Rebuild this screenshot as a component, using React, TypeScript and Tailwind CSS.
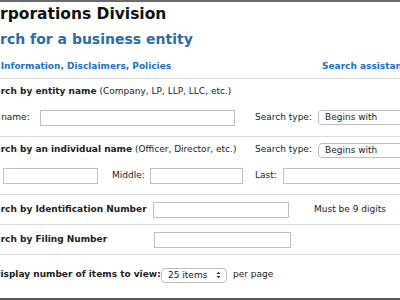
import React from "react";

const inputCls = "shrink-0 h-[16px] border border-[#b7c0ca] bg-white";

function FakeSelect({ w, text, arrows }: { w: string; text: string; arrows?: boolean }) {
  return (
    <div className={`shrink-0 ${w} h-[15px] border border-[#bdbdbd] rounded-[4px] bg-white flex items-center pl-[6px] pr-[5px] justify-between`}>
      <span className="text-[9px] text-[#222] leading-none">{text}</span>
      {arrows && (
        <svg width="5" height="8" viewBox="0 0 5 8" className="shrink-0">
          <path d="M0.5 3 L2.5 0.8 L4.5 3 Z" fill="#333" />
          <path d="M0.5 5 L2.5 7.2 L4.5 5 Z" fill="#333" />
        </svg>
      )}
    </div>
  );
}

export default function App() {
  return (
    <div
      className="w-[400px] h-[300px] overflow-hidden bg-white flex flex-col border-t-2 border-b-2 border-t-[#6a6a6a] border-b-[#5a5a5a] text-[9px] text-[#222] whitespace-nowrap"
      style={{ fontFamily: '"DejaVu Sans", Verdana, sans-serif' }}
    >
      {/* header */}
      <div className="h-[25px] shrink-0 flex items-center pt-[1px]">
        <h1 className="ml-[-22px] text-[15.5px] font-bold text-[#111] leading-none">Corporations Division</h1>
      </div>
      <div className="h-[24px] shrink-0 flex items-center">
        <h2 className="ml-[-29px] text-[14px] font-bold text-[#2d6ca2] leading-none">Search for a business entity</h2>
      </div>
      <div className="h-[28px] shrink-0 flex items-center pt-[4px] border-b border-[#dcdcdc]">
        <span className="ml-[-42px] w-[364px] shrink-0 font-bold text-[#1b6fcc]">General Information, Disclaimers, Policies</span>
        <span className="shrink-0 font-bold text-[#1b6fcc]">Search assistance</span>
      </div>

      {/* entity name */}
      <div className="h-[58px] shrink-0 flex flex-col border-b border-[#dcdcdc]">
        <div className="h-[26px] flex items-center">
          <span className="ml-[-18px]"><b>Search by entity name</b> (Company, LP, LLP, LLC, etc.)</span>
        </div>
        <div className="h-[25px] flex items-center">
          <span className="ml-[-28px] w-[68px] shrink-0">Entity name:</span>
          <div className={`${inputCls} w-[195px]`} />
          <span className="w-[20px] shrink-0" />
          <span className="w-[63px] shrink-0">Search type:</span>
          <FakeSelect w="w-[110px]" text="Begins with" />
        </div>
      </div>

      {/* individual name */}
      <div className="h-[58px] shrink-0 flex flex-col border-b border-[#dcdcdc]">
        <div className="h-[26px] flex items-center">
          <span className="ml-[-18px] w-[273px] shrink-0"><b>Search by an individual name</b> (Officer, Director, etc.)</span>
          <span className="w-[63px] shrink-0">Search type:</span>
          <FakeSelect w="w-[110px]" text="Begins with" />
        </div>
        <div className="h-[25px] flex items-center">
          <span className="ml-[-30px] w-[33px] shrink-0">First:</span>
          <div className={`${inputCls} w-[95px]`} />
          <span className="w-[14px] shrink-0" />
          <span className="w-[38px] shrink-0">Middle:</span>
          <div className={`${inputCls} w-[93px]`} />
          <span className="w-[12px] shrink-0" />
          <span className="w-[28px] shrink-0">Last:</span>
          <div className={`${inputCls} w-[130px]`} />
        </div>
      </div>

      {/* identification number */}
      <div className="h-[30px] shrink-0 flex items-center border-b border-[#dcdcdc]">
        <span className="ml-[-18px] w-[171px] shrink-0 font-bold">Search by Identification Number</span>
        <div className={`${inputCls} w-[136px]`} />
        <span className="w-[25px] shrink-0" />
        <span>Must be 9 digits</span>
      </div>

      {/* filing number */}
      <div className="h-[30px] shrink-0 flex items-center border-b border-[#dcdcdc]">
        <span className="ml-[-18px] w-[172px] shrink-0 font-bold">Search by Filing Number</span>
        <div className={`${inputCls} w-[137px]`} />
      </div>

      {/* items per page */}
      <div className="flex-1 flex items-start pt-[12px]">
        <div className="h-[16px] flex items-center">
          <span className="ml-[-7px] w-[168px] shrink-0 font-bold">Display number of items to view:</span>
          <FakeSelect w="w-[66px]" text="25 items" arrows />
          <span className="w-[6px] shrink-0" />
          <span>per page</span>
        </div>
      </div>
    </div>
  );
}
